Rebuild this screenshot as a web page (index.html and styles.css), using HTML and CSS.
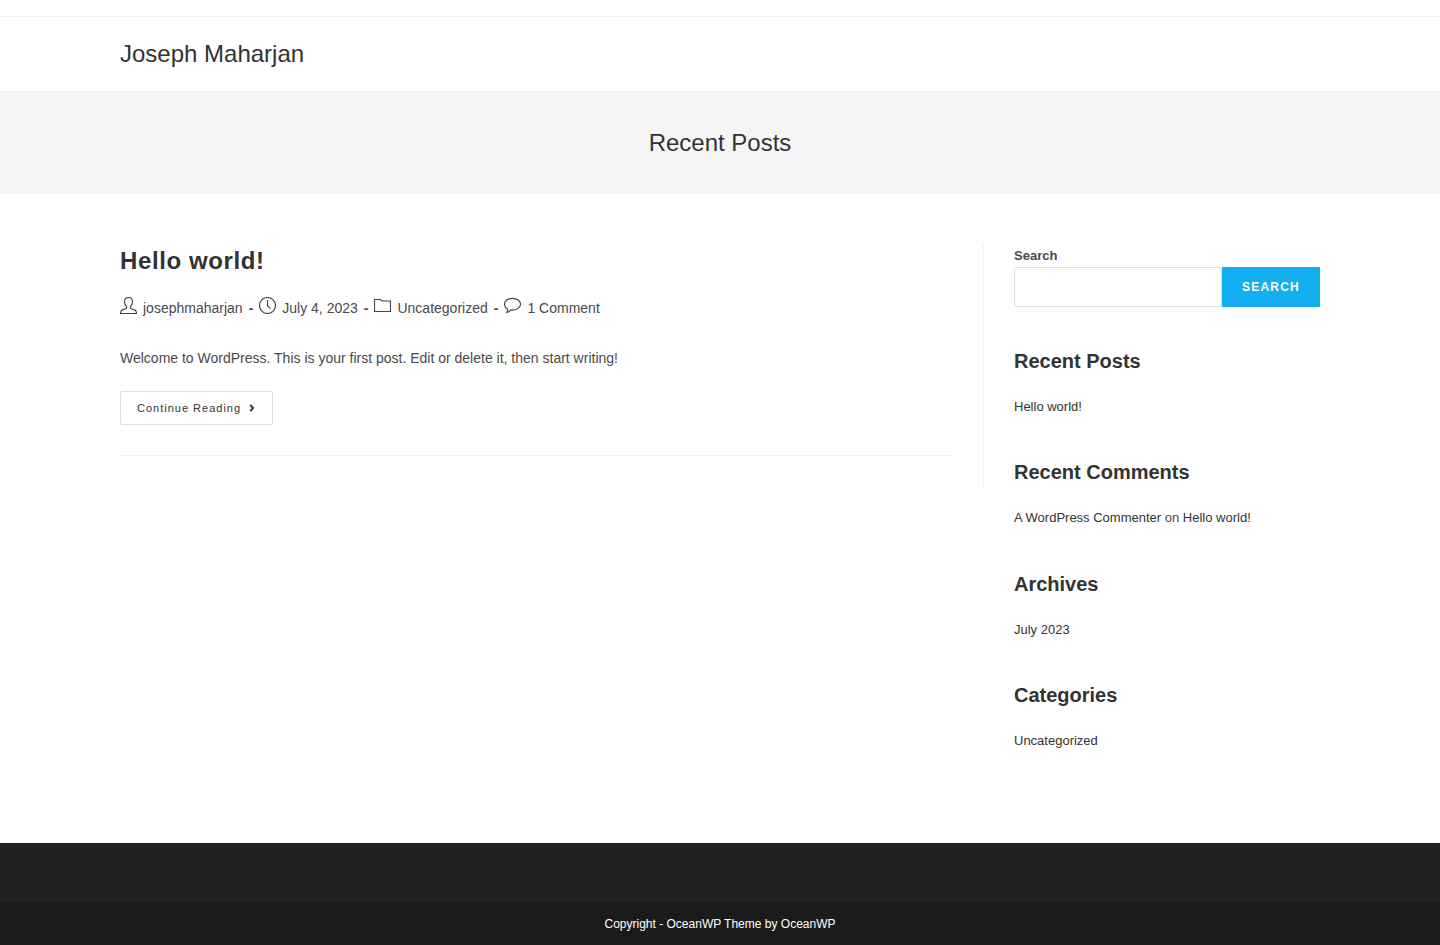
FILE: index.html
```html
<!DOCTYPE html>
<html lang="en">
<head>
<meta charset="utf-8">
<title>Joseph Maharjan</title>
<link rel="stylesheet" href="styles.css">
</head>
<body>
<div class="top-bar"></div>
<header class="site-header"><div class="container"><a class="site-title">Joseph Maharjan</a></div></header>
<section class="page-header"><h1>Recent Posts</h1></section>
<main class="container content">
<div class="primary">
<article class="entry">
<h2 class="entry-title">Hello world!</h2>
<ul class="meta">
<li><svg class="icon" viewBox="0 0 17 17"><path d="M8.500.5C6.100.5 4.500 2.200 4.500 4.600c0 2.100.8 3.900 2.100 5v1.300c0 .5-.2.700-.7.900l-3.500 1.100C1 13.400.5 14.500.5 16.500h16c0-2-.5-3.100-1.900-3.600l-3.500-1.100c-.5-.2-.7-.4-.7-.9V9.600c1.300-1.100 2.100-2.900 2.100-5C12.500 2.200 10.900.5 8.500.5z"/></svg><span>josephmaharjan</span><b>-</b></li>
<li><svg class="icon" viewBox="0 0 17 17"><circle cx="8.5" cy="8.500" r="8"/><path d="M8.500 3v5.700l3 3"/></svg><span>July 4, 2023</span><b>-</b></li>
<li><svg class="icon" viewBox="0 0 17 17"><path d="M.5 14.500v-12h6l1.500 1.500h8.500v10.500z"/></svg><span>Uncategorized</span><b>-</b></li>
<li><svg class="icon" viewBox="0 0 17 17"><path d="M8.500 1.300c4.400 0 8 2.600 8 5.900s-3.600 5.900-8 5.900c-.7 0-1.300-.1-1.900-.2-.8 1.200-1.900 2.300-3.700 2.600.6-1 .8-2.300.5-3.700C1.600 10.700.5 9.100.5 7.200c0-3.300 3.600-5.900 8-5.900z"/></svg><span>1 Comment</span></li>
</ul>
<p class="summary">Welcome to WordPress. This is your first post. Edit or delete it, then start writing!</p>
<a class="read-more">Continue Reading<svg class="chevron" viewBox="0 0 6 8"><path d="M1.200 1l3 3-3 3"/></svg></a>
</article>
</div>
<aside class="sidebar">
<div class="search"><label for="s">Search</label><div class="search-row"><input id="s" type="search"><button>SEARCH</button></div></div>
<section class="widget"><h2>Recent Posts</h2><p>Hello world!</p></section>
<section class="widget"><h2>Recent Comments</h2><p>A WordPress Commenter <span class="muted">on</span> Hello world!</p></section>
<section class="widget"><h2>Archives</h2><p>July 2023</p></section>
<section class="widget"><h2>Categories</h2><p>Uncategorized</p></section>
</aside>
</main>
<footer><div class="footer-widgets"></div><div class="copyright">Copyright - OceanWP Theme by OceanWP</div></footer>
</body>
</html>
```
FILE: styles.css
```css
* { box-sizing: border-box; margin: 0; padding: 0; }
body { font: 14px/25px "Liberation Sans", Arial, sans-serif; color: #4a4a4a; background: #fff; }
.container { width: 1200px; margin: 0 auto; }
.top-bar { height: 17px; border-bottom: 1px solid #f1f1f1; }
.site-header { height: 75px; border-bottom: 1px solid #f1f1f1; }
.site-title { display: block; font-size: 24px; line-height: 74px; color: #333; }
.page-header { height: 102px; background: #f5f5f5; text-align: center; }
.page-header h1 { font-size: 24px; font-weight: 400; line-height: 102px; color: #333; }
.content { display: flex; height: 649px; padding-top: 50px; }
.primary { width: 864px; height: 242px; padding-right: 30px; border-right: 1px solid #f1f1f1; }
.entry { height: 212px; border-bottom: 1px solid #f1f1f1; }
.entry-title { font-size: 24px; line-height: 34px; letter-spacing: .6px; color: #333; }
.meta { display: flex; list-style: none; margin-top: 18px; height: 25px; }
.meta li { display: flex; }
.meta span { margin-left: 6px; }
.meta b { margin: 0 6px; }
.icon { width: 17px; height: 17px; margin-top: 1px; fill: none; stroke: #444; stroke-width: 1.15; }
.summary { margin-top: 25px; }
.read-more { display: inline-flex; align-items: center; width: 153px; height: 34px; margin-top: 20px; padding: 0 16px; border: 1px solid #ddd; border-radius: 2px; font-size: 11px; letter-spacing: 1px; color: #333; }
.chevron { width: 6px; height: 8px; margin-left: 8px; fill: none; stroke: #333; stroke-width: 1.8; }
.sidebar { width: 336px; padding-left: 30px; font-size: 13px; color: #333; }
.search label { display: block; font-weight: 700; line-height: 23px; color: #4a4a4a; }
.search-row { display: flex; height: 40px; }
.search input { width: 208px; height: 40px; border: 1px solid #ddd; border-radius: 3px; background: #fff; }
.search button { width: 98px; border: 0; background: #13aff0; color: #fff; font: 700 12px/40px "Liberation Sans", Arial, sans-serif; letter-spacing: 1.2px; }
.widget { margin-top: 39.500px; height: 72px; }
.widget h2 { font-size: 20px; line-height: 28px; color: #333; }
.widget p { margin-top: 20px; line-height: 24px; }
.muted { color: #4a4a4a; }
.footer-widgets { height: 60px; background: #222; }
.copyright { height: 42px; background: #1b1b1b; color: #fff; font-size: 12px; line-height: 42px; text-align: center; }
```
